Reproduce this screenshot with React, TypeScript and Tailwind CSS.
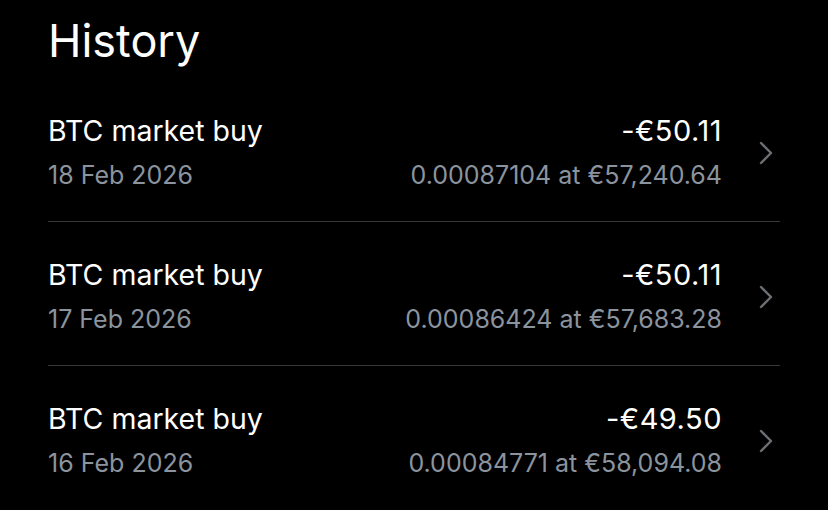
import React from 'react';

type Trade = {
  title: string;
  date: string;
  amount: string;
  detail: string;
};

const trades: Trade[] = [
  { title: 'BTC market buy', date: '18 Feb 2026', amount: '-€50.11', detail: '0.00087104 at €57,240.64' },
  { title: 'BTC market buy', date: '17 Feb 2026', amount: '-€50.11', detail: '0.00086424 at €57,683.28' },
  { title: 'BTC market buy', date: '16 Feb 2026', amount: '-€49.50', detail: '0.00084771 at €58,094.08' },
];

const Chevron = () => (
  <svg width="16" height="24" viewBox="0 0 16 24" fill="none" className="text-[#6c7075]">
    <path d="M3 2 L13 12 L3 22" stroke="currentColor" strokeWidth="2.4" strokeLinecap="round" strokeLinejoin="round" />
  </svg>
);

const TradeRow: React.FC<{ trade: Trade }> = ({ trade }) => (
  <div className="flex items-center h-[143px] pt-[6px]">
    <div className="flex-1 flex flex-col gap-[13px]">
      <span className="text-[28.5px] leading-[32px] text-white">{trade.title}</span>
      <span className="text-[25px] leading-[30px] text-[#8b949e]">{trade.date}</span>
    </div>
    <div className="flex flex-col items-end gap-[13px]">
      <span className="text-[29px] leading-[32px] text-white tracking-[0.5px]">{trade.amount}</span>
      <span className="text-[25px] leading-[30px] text-[#8b949e]">{trade.detail}</span>
    </div>
    <div className="w-[58px] flex justify-end pr-[6px]">
      <Chevron />
    </div>
  </div>
);

export default function App() {
  return (
    <div className="w-[828px] h-[510px] bg-black overflow-hidden px-12 font-['Inter',sans-serif]">
      <h1 className="text-[45px] leading-[56px] pt-[13px] pb-[9px] text-white font-normal">History</h1>
      <div>
        {trades.map((t, i) => (
          <div key={i} className={i > 0 ? 'border-t border-[#38383a]' : ''}>
            <TradeRow trade={t} />
          </div>
        ))}
      </div>
    </div>
  );
}
